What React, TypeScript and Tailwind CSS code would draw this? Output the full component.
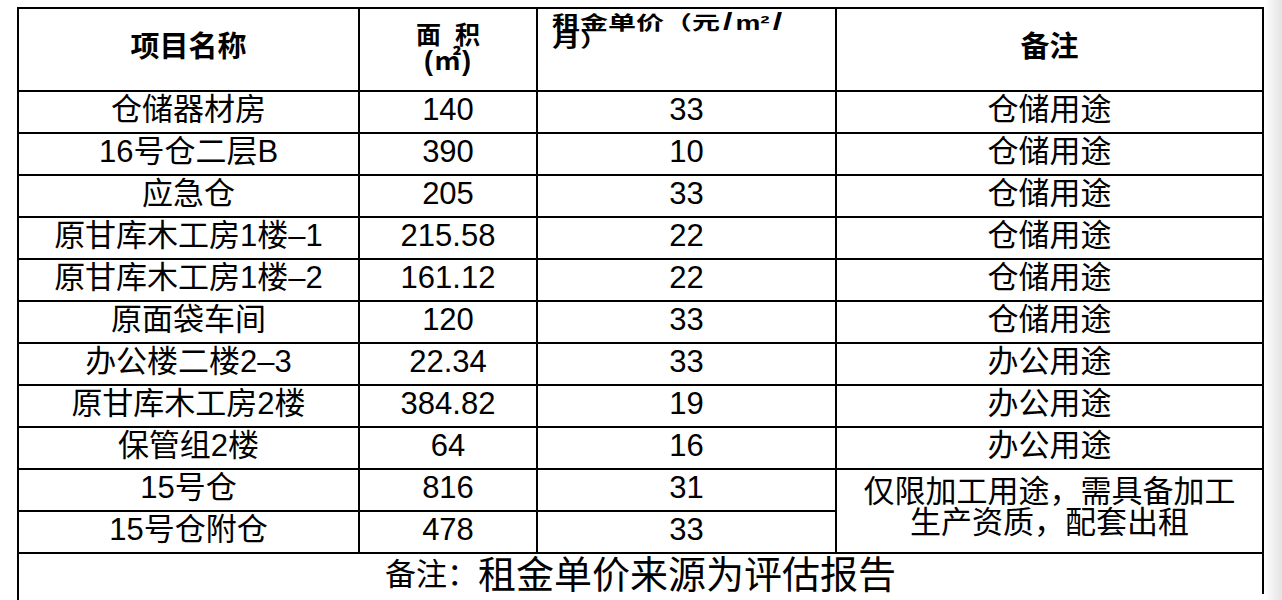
import React from "react";

const rows: [string, string, string, string | null][] = [
  ["仓储器材房", "140", "33", "仓储用途"],
  ["16号仓二层B", "390", "10", "仓储用途"],
  ["应急仓", "205", "33", "仓储用途"],
  ["原甘库木工房1楼–1", "215.58", "22", "仓储用途"],
  ["原甘库木工房1楼–2", "161.12", "22", "仓储用途"],
  ["原面袋车间", "120", "33", "仓储用途"],
  ["办公楼二楼2–3", "22.34", "33", "办公用途"],
  ["原甘库木工房2楼", "384.82", "19", "办公用途"],
  ["保管组2楼", "64", "16", "办公用途"],
  ["15号仓", "816", "31", "merged"],
  ["15号仓附仓", "478", "33", null],
];

const font = { fontFamily: "'Liberation Sans', 'Noto Sans CJK SC', sans-serif" };

function Cell({ children }: { children: React.ReactNode }) {
  return (
    <div className="bg-white flex items-center justify-center pb-[5px] text-[31px] leading-[34px] text-black whitespace-nowrap">
      {children}
    </div>
  );
}

export default function App() {
  return (
    <div className="flex w-[1282px] h-[600px] bg-white overflow-hidden" style={font}>
      <div className="flex-1 pl-[17px] pt-[7px]">
        <div className="grid grid-cols-[339px_176px_297px_425px] grid-rows-[81px_repeat(12,40px)] gap-[2px] bg-black p-[2px] pb-0 w-[1247px]">
          <div className="bg-white flex items-center justify-center pb-[4px] text-[29px] font-bold text-black">
            项目名称
          </div>
          <div className="bg-white flex flex-col items-center justify-center pb-[4px] text-[25px] leading-[26px] font-bold text-black">
            <div className="flex">
              <span>面</span>
              <span className="ml-[14px]">积</span>
            </div>
            <div className="text-[27px] tracking-[1px]">(㎡)</div>
          </div>
          <div className="bg-white pl-[14px] pt-[3px] text-black font-bold overflow-hidden">
            <div className="origin-top scale-y-[0.7] text-[28px] leading-[27px] whitespace-nowrap">
              <div className="h-[27px]">
                <span>租金单价（元</span>
                <span className="mx-[3px] text-[34px] leading-[27px]">/</span>
                <span>m²</span>
                <span className="mx-[3px] text-[34px] leading-[27px]">/</span>
              </div>
              <div className="h-[27px]">月）</div>
            </div>
          </div>
          <div className="bg-white flex items-center justify-center pb-[4px] text-[29px] font-bold text-black">
            备注
          </div>
          {rows.map((r, i) => (
            <React.Fragment key={i}>
              <Cell>{r[0]}</Cell>
              <Cell>{r[1]}</Cell>
              <Cell>{r[2]}</Cell>
              {r[3] === "merged" ? (
                <div className="row-span-2 bg-white flex flex-col items-center justify-center pb-[8px] text-[31px] leading-[31px] text-black whitespace-nowrap">
                  <div>仅限加工用途，需具备加工</div>
                  <div>生产资质，配套出租</div>
                </div>
              ) : r[3] !== null ? (
                <Cell>{r[3]}</Cell>
              ) : null}
            </React.Fragment>
          ))}
          <div className="col-span-4 bg-white flex items-center justify-center pt-[2px] text-black whitespace-nowrap">
            <span className="text-[31px] leading-[36px]">备注：</span>
            <span className="text-[38px] leading-[36px]">租金单价来源为评估报告</span>
          </div>
        </div>
        <div className="h-[6px] border-l-2 border-black w-[1247px]" />
      </div>
      <div className="w-[18px] h-full bg-linear-to-r from-white to-[#e4e4e4]" />
    </div>
  );
}
